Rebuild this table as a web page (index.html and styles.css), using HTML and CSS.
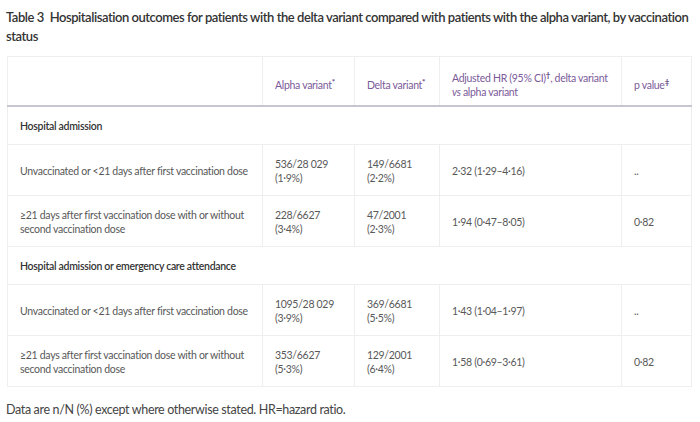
FILE: index.html
```html
<!DOCTYPE html>
<html>
<head>
<meta charset="utf-8">
<link rel="stylesheet" href="styles.css">
</head>
<body>
<div class="page">
  <h1 class="caption"><span class="label">Table 3</span> Hospitalisation outcomes for patients with the delta variant compared with patients with the alpha variant, by vaccination status</h1>
  <table class="tbl">
    <colgroup>
      <col class="c1"><col class="c2"><col class="c3"><col class="c4"><col class="c5">
    </colgroup>
    <thead>
      <tr>
        <th></th>
        <th>Alpha variant<sup class="fn">*</sup></th>
        <th>Delta variant<sup class="fn">*</sup></th>
        <th>Adjusted HR (95% CI)<sup class="fn">†</sup>, delta variant <i>vs</i> alpha variant</th>
        <th>p value<sup class="fn">‡</sup></th>
      </tr>
    </thead>
    <tbody>
      <tr class="section"><td colspan="5">Hospital admission</td></tr>
      <tr>
        <td>Unvaccinated or &lt;21 days after first vaccination dose</td>
        <td>536/28 029<br>(1·9%)</td>
        <td>149/6681<br>(2·2%)</td>
        <td>2·32 (1·29–4·16)</td>
        <td>..</td>
      </tr>
      <tr>
        <td>≥21 days after first vaccination dose with or without second vaccination dose</td>
        <td>228/6627<br>(3·4%)</td>
        <td>47/2001<br>(2·3%)</td>
        <td>1·94 (0·47–8·05)</td>
        <td>0·82</td>
      </tr>
      <tr class="section"><td colspan="5">Hospital admission or emergency care attendance</td></tr>
      <tr>
        <td>Unvaccinated or &lt;21 days after first vaccination dose</td>
        <td>1095/28 029<br>(3·9%)</td>
        <td>369/6681<br>(5·5%)</td>
        <td>1·43 (1·04–1·97)</td>
        <td>..</td>
      </tr>
      <tr>
        <td>≥21 days after first vaccination dose with or without second vaccination dose</td>
        <td>353/6627<br>(5·3%)</td>
        <td>129/2001<br>(6·4%)</td>
        <td>1·58 (0·69–3·61)</td>
        <td>0·82</td>
      </tr>
    </tbody>
  </table>
  <p class="note">Data are n/N (%) except where otherwise stated. HR=hazard ratio.</p>
</div>
</body>
</html>
```

FILE: styles.css
```css
html, body {
  margin: 0;
  padding: 0;
  background: #ffffff;
}
.page {
  padding: 8px 2px 0 6px;
  font-family: Lato, "Noto Sans", sans-serif;
  letter-spacing: -0.3px;
}
.caption {
  margin: 0 0 10px 0;
  font-size: 13px;
  line-height: 19px;
  font-weight: 600;
  color: #333333;
  letter-spacing: -0.45px;
}
.label {
  display: inline-block;
  padding-right: 3px;
}
.tbl {
  width: 684px;
  margin-left: 1px;
  border-collapse: collapse;
  table-layout: fixed;
  font-size: 10.5px;
  line-height: 14px;
  color: #585858;
  border: 1px solid #eeeeee;
}
.c1 { width: 255px; }
.c2 { width: 92px; }
.c3 { width: 85px; }
.c4 { width: 182px; }
.c5 { width: 70px; }
.tbl th {
  height: 28px;
  padding: 14px 11px 6px 12px;
  text-align: left;
  vertical-align: middle;
  font-weight: 400;
  color: #7b5a9a;
  border-left: 1px solid #eeeeee;
  border-bottom: 2px solid #c9c5d0;
}
.tbl th:first-child {
  border-left: none;
}
.fn {
  font-size: 8px;
  line-height: 0;
  font-weight: 700;
  color: #5e3f80;
  vertical-align: super;
}
.tbl td {
  padding: 11px 11px 10px 12px;
  height: 29px;
  vertical-align: middle;
  border-left: 1px solid #eeeeee;
  border-top: 1px solid #eeeeee;
}
.tbl td:first-child {
  border-left: none;
}
.tbl tr.section td {
  height: 16px;
  color: #333333;
  font-weight: 600;
}
.note {
  margin: 15px 0 0 0;
  font-size: 12.5px;
  color: #444444;
  letter-spacing: -0.35px;
}
```
